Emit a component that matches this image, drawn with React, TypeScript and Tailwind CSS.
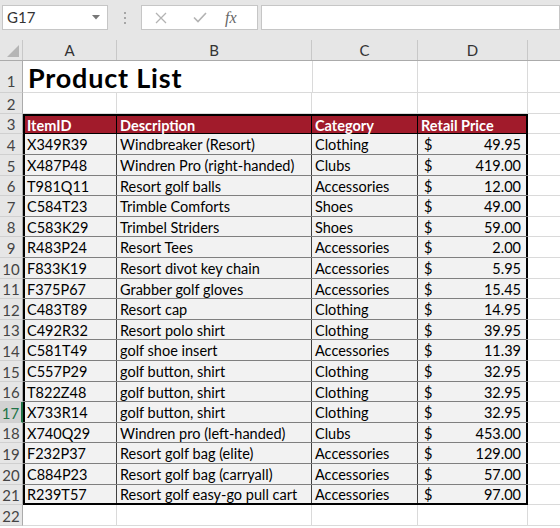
import React from "react";

const rows = [
  ["X349R39", "Windbreaker (Resort)", "Clothing", "49.95"],
  ["X487P48", "Windren Pro (right-handed)", "Clubs", "419.00"],
  ["T981Q11", "Resort golf balls", "Accessories", "12.00"],
  ["C584T23", "Trimble Comforts", "Shoes", "49.00"],
  ["C583K29", "Trimbel Striders", "Shoes", "59.00"],
  ["R483P24", "Resort Tees", "Accessories", "2.00"],
  ["F833K19", "Resort divot key chain", "Accessories", "5.95"],
  ["F375P67", "Grabber golf gloves", "Accessories", "15.45"],
  ["C483T89", "Resort cap", "Clothing", "14.95"],
  ["C492R32", "Resort polo shirt", "Clothing", "39.95"],
  ["C581T49", "golf shoe insert", "Accessories", "11.39"],
  ["C557P29", "golf button, shirt", "Clothing", "32.95"],
  ["T822Z48", "golf button, shirt", "Clothing", "32.95"],
  ["X733R14", "golf button, shirt", "Clothing", "32.95"],
  ["X740Q29", "Windren pro (left-handed)", "Clubs", "453.00"],
  ["F232P37", "Resort golf bag (elite)", "Accessories", "129.00"],
  ["C884P23", "Resort golf bag (carryall)", "Accessories", "57.00"],
  ["R239T57", "Resort golf easy-go pull cart", "Accessories", "97.00"],
];

const rowNums = Array.from({ length: 22 }, (_, i) => i + 1);

export default function App() {
  return (
    <div className="w-[560px] h-[528px] overflow-hidden bg-white font-['Lato',sans-serif] text-[14.5px] text-black">
      {/* formula bar */}
      <div className="flex h-[40px] items-start bg-[#e6e6e6] pt-[5px] pl-[2px]">
        <div className="flex h-[25px] w-[106px] items-center justify-between border border-[#c6c6c6] bg-white pl-[4px] pr-[7px] text-[15px] text-[#333]">
          <span>G17</span>
          <svg width="8" height="5" viewBox="0 0 8 5">
            <path d="M0 0h8L4 4.5z" fill="#777" />
          </svg>
        </div>
        <div className="flex w-[33px] flex-col items-center gap-[3px] pt-[7px]">
          <div className="h-[2px] w-[2px] bg-[#a6a6a6]" />
          <div className="h-[2px] w-[2px] bg-[#a6a6a6]" />
          <div className="h-[2px] w-[2px] bg-[#a6a6a6]" />
        </div>
        <div className="flex h-[25px] w-[117px] items-center border border-[#c6c6c6] bg-white">
          <svg className="ml-[13px]" width="12" height="12" viewBox="0 0 12 12">
            <path d="M1 1l10 10M11 1L1 11" stroke="#b3b3b3" strokeWidth="1.3" />
          </svg>
          <svg className="ml-[26px]" width="14" height="11" viewBox="0 0 14 11">
            <path d="M1 5.5l4 4L13 1" stroke="#b3b3b3" strokeWidth="1.6" fill="none" />
          </svg>
          <span className="ml-[18px] font-['Liberation_Serif',serif] text-[16px] italic text-[#666]">
            fx
          </span>
        </div>
        <div className="ml-[3px] h-[25px] flex-1 border border-[#c6c6c6] bg-white" />
      </div>

      {/* column headers */}
      <div className="flex h-[21px] border-b border-[#ababab] bg-[#e6e6e6] text-[15px] text-[#333]">
        <div className="flex w-[23px] items-end justify-end border-r border-[#c8c8c8] pb-[3px] pr-[3px]">
          <svg width="12" height="12" viewBox="0 0 12 12">
            <path d="M12 0v12H0z" fill="#b5b5b5" />
          </svg>
        </div>
        <div className="flex w-[94px] items-center justify-center border-r border-[#c8c8c8]">A</div>
        <div className="flex w-[195px] items-center justify-center border-r border-[#c8c8c8]">B</div>
        <div className="flex w-[106px] items-center justify-center border-r border-[#c8c8c8]">C</div>
        <div className="flex w-[110px] items-center justify-center border-r border-[#c8c8c8]">D</div>
        <div className="flex-1" />
      </div>

      <div className="flex">
        {/* row headers */}
        <div className="flex w-[23px] flex-col bg-[#e6e6e6] text-[15px] text-[#444]">
          {rowNums.map((n) => (
            <div
              key={n}
              className={
                n === 1
                  ? "flex h-[32.3px] items-end justify-center border-b border-r border-b-[#d0d0d0] border-r-[#ababab]"
                  : n === 17
                  ? "flex h-[20.6px] items-center justify-center border-b border-r-2 border-b-[#d0d0d0] border-r-[#217346] bg-[#d2d2d2] pt-[2px] text-[#217346]"
                  : "flex h-[20.6px] items-center justify-center border-b border-r border-b-[#d0d0d0] border-r-[#ababab] pt-[2px]"
              }
            >
              {n}
            </div>
          ))}
        </div>

        {/* sheet */}
        <div className="flex flex-1 flex-col">
          <div className="flex h-[32.3px] border-b border-[#dadada]">
            <div className="flex w-[289px] items-end pb-[1px] pl-[5px] text-[27px] font-bold leading-none tracking-[0.8px]">
              Product List
            </div>
            <div className="w-[106px] border-l border-r border-[#dadada]" />
            <div className="w-[110px] border-r border-[#dadada]" />
            <div className="flex-1" />
          </div>
          <div className="flex h-[20.6px] border-b border-[#dadada]">
            <div className="w-[94px] border-r border-[#dadada]" />
            <div className="w-[195px] border-r border-[#dadada]" />
            <div className="w-[106px] border-r border-[#dadada]" />
            <div className="w-[110px] border-r border-[#dadada]" />
            <div className="flex-1" />
          </div>

          {/* table */}
          <div className="flex">
            <div className="flex w-[505px] flex-col">
              <div className="flex h-[20.6px] border-t-2 border-b border-black bg-[#a11b2b] font-bold text-white">
                <div className="flex w-[94px] items-center border-l-2 border-r border-black pl-[2px] pt-[2px]">ItemID</div>
                <div className="flex w-[195px] items-center border-r border-black pl-[3px] pt-[2px]">Description</div>
                <div className="flex w-[106px] items-center border-r border-black pl-[3px] pt-[2px]">Category</div>
                <div className="flex w-[110px] items-center border-r-2 border-black pl-[3px] pt-[2px]">Retail Price</div>
              </div>
              {rows.map((r, i) => (
                <div
                  key={r[0]}
                  className={
                    i === rows.length - 1
                      ? "flex h-[20.6px] border-b-2 border-black bg-[#f2f2f2]"
                      : "flex h-[20.6px] border-b border-[#7f7f7f] bg-[#f2f2f2]"
                  }
                >
                  <div className="flex w-[94px] items-center border-l-2 border-r border-l-black border-r-[#404040] pl-[2px] pt-[2px]">
                    {r[0]}
                  </div>
                  <div className="flex w-[195px] items-center whitespace-nowrap border-r border-[#404040] pl-[3px] pt-[2px]">
                    {r[1]}
                  </div>
                  <div className="flex w-[106px] items-center border-r border-[#404040] pl-[3px] pt-[2px]">
                    {r[2]}
                  </div>
                  <div className="flex w-[110px] items-center justify-between border-r-2 border-black pl-[6px] pr-[5px] pt-[2px]">
                    <span>$</span>
                    <span>{r[3]}</span>
                  </div>
                </div>
              ))}
            </div>
            <div className="flex flex-1 flex-col">
              {rowNums.slice(2, 21).map((n) => (
                <div key={n} className="flex-1 border-b border-[#dadada]" />
              ))}
            </div>
          </div>

          <div className="flex h-[20.6px] border-b border-[#dadada]">
            <div className="w-[94px] border-r border-[#dadada]" />
            <div className="w-[195px] border-r border-[#dadada]" />
            <div className="w-[106px] border-r border-[#dadada]" />
            <div className="w-[110px] border-r border-[#dadada]" />
            <div className="flex-1" />
          </div>
        </div>
      </div>
    </div>
  );
}
